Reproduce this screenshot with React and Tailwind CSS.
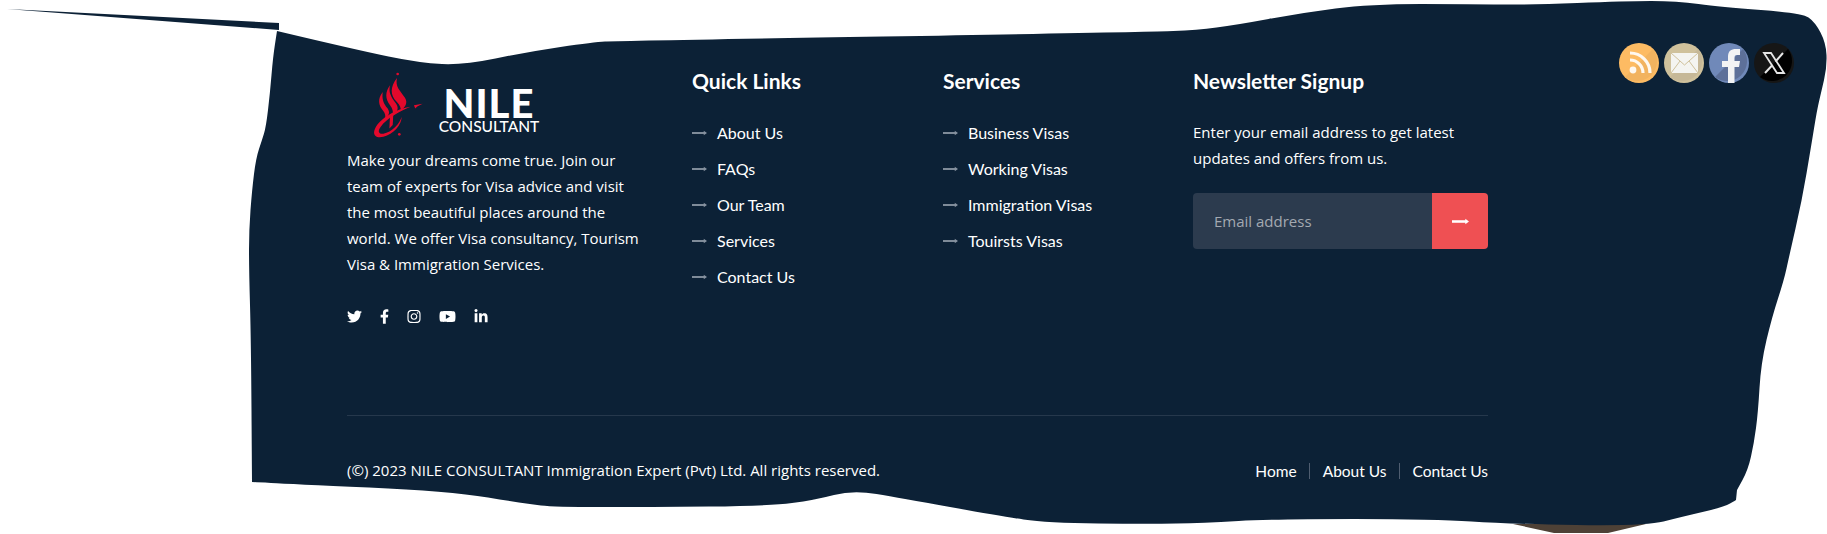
import { FaTwitter, FaFacebookF, FaInstagram, FaYoutube, FaLinkedinIn } from "react-icons/fa";

const quickLinks = ["About Us", "FAQs", "Our Team", "Services", "Contact Us"];
const services = ["Business Visas", "Working Visas", "Immigration Visas", "Touirsts Visas"];

// torn outline of the footer, a doubled point keeps its corner sharp
const outline = [
  [357, 50], [420, 63], [464, 65], [527, 52], [594, 42], [616, 41], [1150, 32], [1197, 30], [1236, 25], [1301, 13],
  [1370, 4], [1472, 4], [1530, 5], [1625, 1], [1677, 1], [1720, 7], [1802, 13], [1815, 22], [1826, 43], [1827, 67],
  [1821, 93], [1817, 110], [1811, 147], [1802, 200], [1789, 257], [1784, 280], [1772, 317], [1761, 363], [1758, 413],
  [1754, 443], [1748, 470], [1737, 490], [1737, 490], [1736, 500], [1736, 500], [1724, 507], [1681, 517], [1646, 526], [1508, 524], [1435, 519],
  [1275, 519], [1202, 523], [1150, 524], [1047, 523], [1000, 516], [900, 498], [853, 490], [815, 500], [769, 506],
  [649, 507], [554, 507], [528, 504], [448, 491], [290, 484], [252, 482], [252, 482], [251, 340], [249, 270], [249, 230], [252, 190], [256, 158],
  [262, 140], [266, 127], [270, 93], [273, 57],
];

// rounds the corners by running through the midpoints
function smoothPath(points) {
  let d = "M277 31";
  points.forEach((p, i) => {
    const next = points[i + 1] || [277, 31];
    d += ` Q${p[0]} ${p[1]} ${(p[0] + next[0]) / 2} ${(p[1] + next[1]) / 2}`;
  });
  return d + " Z";
}

function Arrow({ className, thick }) {
  return (
    <svg viewBox="0 0 16 8" className={className} fill="currentColor">
      <rect x="0" y={thick ? 2.8 : 3} width="14" height={thick ? 2.4 : 2} />
      <path d="M12.500 1.500 L16 4 L12.500 6.500 Z" />
    </svg>
  );
}

function LinkColumn({ title, links }) {
  return (
    <div>
      <h4 className="font-['Lato',sans-serif] text-[21px] leading-[26px] font-bold text-white">{title}</h4>
      <ul className="mt-[21px]">
        {links.map((l) => (
          <li key={l} className="flex h-[36px] items-center gap-[10px] font-['Lato',sans-serif] text-[16px] text-white">
            <Arrow className="h-[8px] w-[15px] text-[#8792a0]" />
            {l}
          </li>
        ))}
      </ul>
    </div>
  );
}

function Logo() {
  return (
    <div className="ml-[23px] flex h-[76px] items-center">
      <svg viewBox="90 40 165 205" className="h-[68px] w-[55px]" fill="#e4092c">
        <circle cx="173" cy="46" r="4" />
        <path d="M171 58 C150 85 150 110 170 130 C180 140 184 150 182 158 C195 145 205 135 195 118 C180 95 165 85 171 58 Z" />
        <path d="M150 80 C135 100 135 120 150 140 C158 150 160 160 158 172 C172 160 178 150 168 135 C152 115 145 100 150 80 Z" />
        <path d="M128 100 C112 120 115 140 128 155 C135 163 137 170 135 180 C148 170 150 162 143 150 C130 135 125 120 128 100 Z" />
        <path d="M212 145 C170 150 120 180 105 210 C95 232 110 240 130 235 C160 228 185 200 185 175 C180 195 155 222 130 226 C115 228 112 218 122 205 C140 180 180 158 212 145 Z" />
        <path d="M150 172 L160 165 L158 200 L148 210 Z" />
        <circle cx="178" cy="228" r="4" />
        <path d="M222 140 L248 136 L232 144 L226 150 Z" />
      </svg>
      <div className="ml-[13px] flex w-[102px] flex-col items-center self-start pt-[20px] text-white">
        <span className="font-['Lato',sans-serif] text-[40px] leading-[30px] font-black tracking-[1px]">NILE</span>
        <span className="mt-[1px] font-['Lato',sans-serif] text-[15.5px] leading-[14px] font-medium whitespace-nowrap">
          CONSULTANT
        </span>
      </div>
    </div>
  );
}

function FloatIcon({ base, shade, children }) {
  return (
    <svg viewBox="0 0 40 40" className="h-[40px] w-[40px]">
      <circle cx="20" cy="20" r="20" fill={base} />
      <path d="M34 6 A20 20 0 0 1 6 34 Z" fill={shade} />
      {children}
    </svg>
  );
}

function FloatIcons() {
  return (
    <div className="absolute top-[43px] left-[1619px] flex gap-[5px]">
      <FloatIcon base="#fdbb63" shade="#f2b35f">
        <circle cx="14" cy="27" r="3.4" fill="#fff" opacity="0.9" />
        <path d="M11 17 A13 13 0 0 1 24 30" fill="none" stroke="#fff" strokeWidth="3.2" opacity="0.9" />
        <path d="M11 10 A20 20 0 0 1 31 30" fill="none" stroke="#fff" strokeWidth="3.2" opacity="0.9" />
      </FloatIcon>
      <FloatIcon base="#cfc19c" shade="#c6b898">
        <rect x="7" y="10" width="27" height="20" rx="1" fill="#f4f4f1" />
        <path d="M7 10 L20.5 22 L34 10 M7 30 L16 18 M34 30 L25 18" fill="none" stroke="#cfc19c" strokeWidth="1" />
      </FloatIcon>
      <FloatIcon base="#7089b9" shade="#5d7099">
        <path d="M19 40 V24 H13 V18 H19 V14 C19 8 22 6 27 6 H31 V12 H28 C26 12 25.500 13 25.500 15 V18 H31 L30 24 H25.500 V40 Z" fill="#f2f3f4" />
      </FloatIcon>
      <FloatIcon base="#161616" shade="#000000">
        <path d="M10 10 H17 L30 30 H23 Z" fill="none" stroke="#e6e6e6" strokeWidth="1.800" />
        <path d="M29 10 L21.500 18.500 M18.500 22 L11 30" stroke="#e6e6e6" strokeWidth="2" />
      </FloatIcon>
    </div>
  );
}

export default function App() {
  return (
    <div className="relative h-[534px] w-[1827px] overflow-hidden bg-white font-['Open_Sans',sans-serif] text-[15px] leading-[26px] text-white">
      {/* torn footer shape, sits behind the content */}
      <svg viewBox="0 0 1827 534" className="absolute inset-0 h-[534px] w-[1827px]">
        <path d="M1513 524 H1646 L1608 533 H1554 Z" fill="#4e4136" />
        <path d="M7 9 L279 23 V30 Z" fill="#0c2136" />
        <path d={smoothPath(outline)} fill="#0c2136" />
      </svg>

      <div className="relative ml-[347px] w-[1141px] pt-[68px]">
        <div className="grid h-[348px] grid-cols-[345px_251px_250px_295px] border-b border-[#26384c]">
          <div>
            <Logo />
            <p className="mt-[3px] w-[300px]">
              Make your dreams come true. Join our team of experts for Visa advice and visit the most beautiful places
              around the world. We offer Visa consultancy, Tourism Visa &amp; Immigration Services.
            </p>
            <div className="mt-[32px] flex h-[15px] items-center gap-[18px]">
              <FaTwitter className="h-[15px] w-[15px]" />
              <FaFacebookF className="h-[15px] w-[9px]" />
              <FaInstagram className="h-[15px] w-[14px]" />
              <FaYoutube className="h-[15px] w-[17px]" />
              <FaLinkedinIn className="h-[15px] w-[14px]" />
            </div>
          </div>

          <LinkColumn title="Quick Links" links={quickLinks} />
          <LinkColumn title="Services" links={services} />

          <div>
            <h4 className="font-['Lato',sans-serif] text-[21px] leading-[26px] font-bold text-white">Newsletter Signup</h4>
            <p className="mt-[25px] w-[290px]">Enter your email address to get latest updates and offers from us.</p>
            <div className="mt-[22px] flex h-[56px]">
              <input
                placeholder="Email address"
                className="w-[239px] rounded-l-sm bg-[#2c3b4e] pl-[21px] text-[15px] text-white outline-none placeholder:text-[#a3a9b1]"
              />
              <button className="flex w-[56px] items-center justify-center rounded-r-sm bg-[#ef5053] text-white">
                <Arrow thick className="h-[9px] w-[17px]" />
              </button>
            </div>
          </div>
        </div>

        <div className="mt-[40px] flex items-center justify-between">
          <p>(©) 2023 NILE CONSULTANT Immigration Expert (Pvt) Ltd. All rights reserved.</p>
          <div className="flex items-center pt-[2px] font-['Lato',sans-serif] text-[15.5px]">
            <span>Home</span>
            <span className="mx-[12.5px] h-[16px] w-px bg-[#4f5d70]" />
            <span>About Us</span>
            <span className="mx-[12.5px] h-[16px] w-px bg-[#4f5d70]" />
            <span>Contact Us</span>
          </div>
        </div>
      </div>

      <FloatIcons />
    </div>
  );
}
